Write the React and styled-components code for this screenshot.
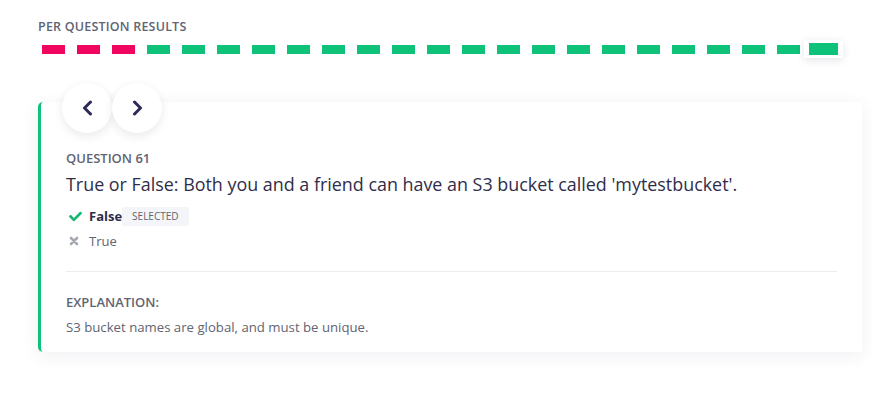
import React from "react";
import styled, { createGlobalStyle } from "styled-components";
import { FaCheck } from "react-icons/fa";

const COLORS = {
  red: "#f0055f",
  green: "#0ec27a",
  navy: "#2d2a55",
  text: "#2f2d4a",
  subtext: "#5f6472",
  muted: "#a3a8b2",
};

const results = [
  ...Array(3).fill(false),
  ...Array(20).fill(true),
];

const GlobalStyle = createGlobalStyle`
  body {
    margin: 0;
    background: #ffffff;
    font-family: "Open Sans", "Noto Sans", sans-serif;
  }
`;

const Chevron = ({ dir }) => (
  <svg width="11" height="16" viewBox="0 0 11 16">
    <polyline
      points={dir === "left" ? "8.5,2 2.5,8 8.5,14" : "2.5,2 8.5,8 2.5,14"}
      fill="none"
      stroke="currentColor"
      strokeWidth="3"
      strokeLinecap="round"
      strokeLinejoin="round"
    />
  </svg>
);

const Cross = () => (
  <svg width="10" height="10" viewBox="0 0 10 10">
    <path
      d="M2 2 L8 8 M8 2 L2 8"
      stroke="currentColor"
      strokeWidth="2.6"
      strokeLinecap="round"
    />
  </svg>
);

const App = () => {
  return (
    <Page>
      <GlobalStyle />
      <SectionLabel>Per question results</SectionLabel>
      <ResultBar>
        {results.map((ok, i) => (
          <Dash key={i} $ok={ok} $active={i === results.length - 1} />
        ))}
      </ResultBar>

      <Card>
        <NavButtons>
          <NavButton>
            <Chevron dir="left" />
          </NavButton>
          <NavButton>
            <Chevron dir="right" />
          </NavButton>
        </NavButtons>

        <QuestionLabel>Question 61</QuestionLabel>
        <QuestionText>
          True or False: Both you and a friend can have an S3 bucket called
          'mytestbucket'.
        </QuestionText>

        <Options>
          <Option>
            <OptionIcon $correct>
              <FaCheck />
            </OptionIcon>
            <OptionText $selected>False</OptionText>
            <Badge>Selected</Badge>
          </Option>
          <Option>
            <OptionIcon>
              <Cross />
            </OptionIcon>
            <OptionText>True</OptionText>
          </Option>
        </Options>

        <Divider />

        <ExplanationLabel>Explanation:</ExplanationLabel>
        <ExplanationText>S3 bucket names are global, and must be unique.</ExplanationText>
      </Card>
    </Page>
  );
};

export default App;

const Page = styled.div`
  padding: 19px 10px 40px 38px;
`;

//////////////results strip
const SectionLabel = styled.div`
  font-size: 12.5px;
  font-weight: 600;
  letter-spacing: 0.2px;
  text-transform: uppercase;
  color: ${COLORS.subtext};
  line-height: 16px;
`;

const ResultBar = styled.div`
  display: flex;
  align-items: center;
  gap: 12px;
  margin-top: 5px;
  padding-left: 4px;
  height: 18px;
`;

const Dash = styled.div`
  width: ${(p) => (p.$active ? "29px" : "23px")};
  height: ${(p) => (p.$active ? "12px" : "9px")};
  background: ${(p) => (p.$ok ? COLORS.green : COLORS.red)};
  ${(p) =>
    p.$active &&
    `
    margin-left: -8px;
    border: 3px solid #fff;
    border-width: 3px 5px;
    box-sizing: content-box;
    box-shadow: 0 2px 8px rgba(40, 40, 90, 0.12);
  `}
`;
//////////////results strip ends

//////////////card
const Card = styled.div`
  position: relative;
  margin-top: 44px;
  width: 824px;
  box-sizing: border-box;
  padding: 48px 25px 16px 25px;
  background: #fff;
  border-left: 3px solid ${COLORS.green};
  border-radius: 5px 0 0 5px;
  box-shadow: 0 4px 18px rgba(40, 40, 90, 0.07);
`;

const NavButtons = styled.div`
  position: absolute;
  top: -19px;
  left: 21px;
  display: flex;
`;

const NavButton = styled.button`
  width: 50px;
  height: 50px;
  border-radius: 50%;
  border: none;
  background: #fff;
  color: ${COLORS.navy};
  display: flex;
  align-items: center;
  justify-content: center;
  padding: 0;
  box-shadow: 0 3px 10px rgba(40, 40, 90, 0.1);
`;

const QuestionLabel = styled.div`
  font-size: 13px;
  font-weight: 600;
  text-transform: uppercase;
  color: ${COLORS.subtext};
  line-height: 16px;
`;

const QuestionText = styled.div`
  margin-top: 6px;
  font-size: 17.9px;
  color: ${COLORS.text};
  line-height: 24px;
`;

const Options = styled.div`
  display: flex;
  flex-direction: column;
  gap: 5px;
  margin-top: 10px;
`;

const Option = styled.div`
  display: flex;
  align-items: center;
  height: 20px;
`;

const OptionIcon = styled.span`
  display: flex;
  width: 20px;
  padding-left: 3px;
  font-size: 13px;
  color: ${(p) => (p.$correct ? "#16b873" : COLORS.muted)};
`;

const OptionText = styled.span`
  font-size: 13px;
  font-weight: ${(p) => (p.$selected ? 700 : 400)};
  color: ${(p) => (p.$selected ? COLORS.text : COLORS.subtext)};
`;

const Badge = styled.span`
  margin-left: 0;
  padding: 2px 10px;
  background: #f3f5f8;
  border-radius: 2px;
  font-size: 10px;
  text-transform: uppercase;
  color: ${COLORS.subtext};
  line-height: 15px;
`;

const Divider = styled.div`
  margin-top: 20px;
  height: 1px;
  background: #ececf0;
`;

const ExplanationLabel = styled.div`
  margin-top: 21px;
  font-size: 13px;
  font-weight: 600;
  text-transform: uppercase;
  color: ${COLORS.subtext};
  line-height: 18px;
`;

const ExplanationText = styled.div`
  margin-top: 7px;
  font-size: 13.2px;
  color: ${COLORS.subtext};
  line-height: 18px;
`;
//////////////card ends
